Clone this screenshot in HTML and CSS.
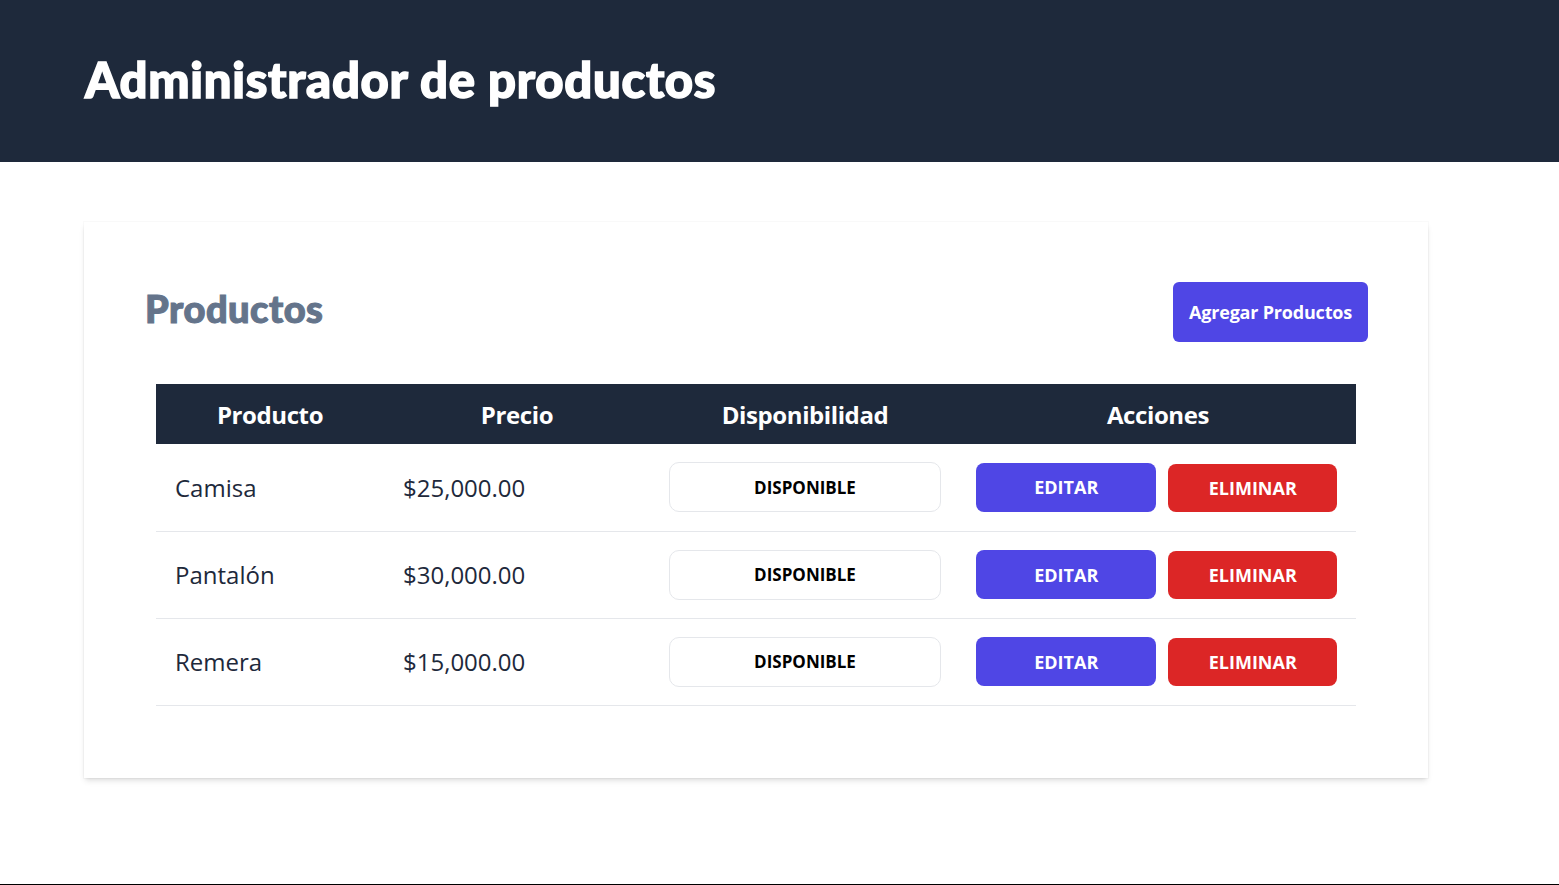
FILE: index.html
```html
<!DOCTYPE html>
<html lang="es">
<head>
<meta charset="utf-8">
<title>Administrador de productos</title>
<link rel="stylesheet" href="styles.css">
</head>
<body>
<div class="page">
  <header class="topbar">
    <h1 class="title">Administrador de productos</h1>
  </header>
  <main class="main">
    <section class="card">
      <div class="card-head">
        <h2 class="card-title">Productos</h2>
        <a class="btn-add" href="#">Agregar Productos</a>
      </div>
      <div class="table-wrap">
        <table class="table">
          <colgroup>
            <col class="c1"><col class="c2"><col class="c3"><col class="c4">
          </colgroup>
          <thead>
            <tr><th>Producto</th><th>Precio</th><th>Disponibilidad</th><th>Acciones</th></tr>
          </thead>
          <tbody>
            <tr>
              <td>Camisa</td><td>$25,000.00</td>
              <td><div class="badge">Disponible</div></td>
              <td><div class="actions"><button class="btn btn-edit">Editar</button><button class="btn btn-del">Eliminar</button></div></td>
            </tr>
            <tr>
              <td>Pantalón</td><td>$30,000.00</td>
              <td><div class="badge">Disponible</div></td>
              <td><div class="actions"><button class="btn btn-edit">Editar</button><button class="btn btn-del">Eliminar</button></div></td>
            </tr>
            <tr>
              <td>Remera</td><td>$15,000.00</td>
              <td><div class="badge">Disponible</div></td>
              <td><div class="actions"><button class="btn btn-edit">Editar</button><button class="btn btn-del">Eliminar</button></div></td>
            </tr>
          </tbody>
        </table>
      </div>
    </section>
  </main>
</div>
</body>
</html>
```
FILE: styles.css
```css
* { box-sizing: border-box; }
html, body { margin: 0; padding: 0; }
body {
  font-family: "Open Sans", "Noto Sans", sans-serif;
  background: #fff;
  color: #1e293b;
}
.page {
  min-height: 885px;
  border-bottom: 1px solid #000;
}
.topbar {
  height: 162px;
  background: #1e293b;
  display: flex;
  align-items: center;
  padding-left: 85px;
  padding-bottom: 4px;
}
.title {
  margin: 0;
  color: #fff;
  font-family: Lato, "Open Sans", sans-serif;
  font-size: 49px;
  font-weight: 900;
  line-height: 1;
  letter-spacing: 0.7px;
  -webkit-text-stroke: 1.5px #fff;
}
.main {
  padding: 60px 0 0 84px;
}
.card {
  width: 1344px;
  background: #fff;
  padding: 60px;
  box-shadow: 0 4px 6px -1px rgba(0,0,0,.1), 0 2px 4px -2px rgba(0,0,0,.1), 0 0 0 1px rgba(0,0,0,.02);
}
.card-head {
  display: flex;
  justify-content: space-between;
  align-items: center;
}
.card-title {
  margin: 0 0 8px 1px;
  font-family: Lato, "Open Sans", sans-serif;
  font-size: 38px;
  font-weight: 900;
  color: #64748b;
  line-height: 1;
  -webkit-text-stroke: 1.1px #64748b;
  letter-spacing: 0.5px;
}
.btn-add {
  display: flex;
  align-items: center;
  justify-content: center;
  width: 195px;
  height: 60px;
  background: #4f46e5;
  color: #fff;
  border-radius: 6px;
  font-size: 18px;
  font-weight: 700;
  text-decoration: none;
  letter-spacing: -0.2px;
}
.table-wrap {
  margin: 42px 12px 12px;
}
.table {
  width: 1200px;
  border-collapse: collapse;
  table-layout: fixed;
}
.c1 { width: 228px; }
.c2 { width: 266px; }
.c3 { width: 310px; }
.c4 { width: 396px; }
.table thead tr {
  background: #1e293b;
  height: 60px;
}
.table th {
  color: #fff;
  font-size: 24px;
  font-weight: 700;
  text-align: center;
  padding: 0;
  letter-spacing: -0.4px;
}
.table tbody tr {
  height: 87px;
  border-bottom: 1px solid #e5e7eb;
}
.table td {
  font-size: 24px;
  padding: 0 19px;
  vertical-align: middle;
  color: #1e293b;
}
.badge {
  height: 50px;
  border: 1px solid #e5e7eb;
  border-radius: 10px;
  display: flex;
  align-items: center;
  justify-content: center;
  font-size: 17px;
  font-weight: 700;
  text-transform: uppercase;
  color: #000;
}
.actions {
  display: flex;
  align-items: center;
  gap: 12px;
  margin-left: -3px;
}
.btn {
  border: 0;
  color: #fff;
  font-family: inherit;
  font-size: 18px;
  font-weight: 700;
  text-transform: uppercase;
  border-radius: 8px;
  cursor: pointer;
  padding: 0;
}
.btn-edit { width: 181px; height: 49px; background: #4f46e5; }
.btn-del { width: 169px; height: 48px; background: #dc2626; margin-top: 1px; }
```
